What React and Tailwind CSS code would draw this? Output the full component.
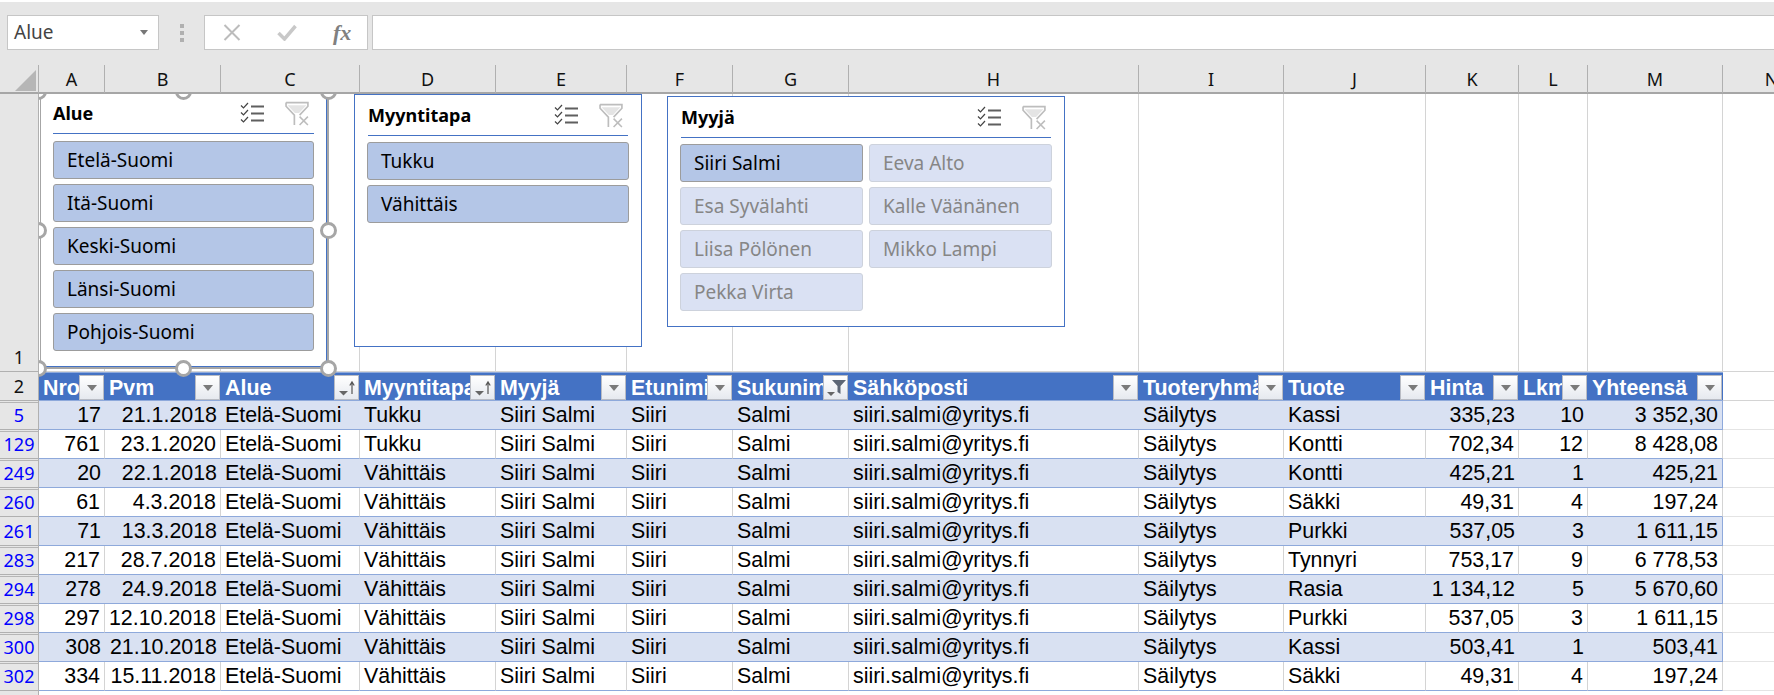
import React from 'react';

const gridCols = "grid grid-cols-[39px_66px_116px_139px_136px_131px_106px_116px_290px_145px_142px_93px_69px_135px_98px]";
const colLetters = ['A', 'B', 'C', 'D', 'E', 'F', 'G', 'H', 'I', 'J', 'K', 'L', 'M', 'N'];

const headers = [
    { label: 'Nro' },
    { label: 'Pvm' },
    { label: 'Alue', icon: 'sort' },
    { label: 'Myyntitapa', icon: 'sort' },
    { label: 'Myyjä' },
    { label: 'Etunimi' },
    { label: 'Sukunimi', icon: 'filter' },
    { label: 'Sähköposti' },
    { label: 'Tuoteryhmä' },
    { label: 'Tuote' },
    { label: 'Hinta' },
    { label: 'Lkm' },
    { label: 'Yhteensä' },
];

const rows = [
    { row: '5', nro: '17', pvm: '21.1.2018', tapa: 'Tukku', tuote: 'Kassi', hinta: '335,23', lkm: '10', yht: '3 352,30', gap: true },
    { row: '129', nro: '761', pvm: '23.1.2020', tapa: 'Tukku', tuote: 'Kontti', hinta: '702,34', lkm: '12', yht: '8 428,08', gap: true },
    { row: '249', nro: '20', pvm: '22.1.2018', tapa: 'Vähittäis', tuote: 'Kontti', hinta: '425,21', lkm: '1', yht: '425,21', gap: true },
    { row: '260', nro: '61', pvm: '4.3.2018', tapa: 'Vähittäis', tuote: 'Säkki', hinta: '49,31', lkm: '4', yht: '197,24', gap: true },
    { row: '261', nro: '71', pvm: '13.3.2018', tapa: 'Vähittäis', tuote: 'Purkki', hinta: '537,05', lkm: '3', yht: '1 611,15' },
    { row: '283', nro: '217', pvm: '28.7.2018', tapa: 'Vähittäis', tuote: 'Tynnyri', hinta: '753,17', lkm: '9', yht: '6 778,53', gap: true },
    { row: '294', nro: '278', pvm: '24.9.2018', tapa: 'Vähittäis', tuote: 'Rasia', hinta: '1 134,12', lkm: '5', yht: '5 670,60', gap: true },
    { row: '298', nro: '297', pvm: '12.10.2018', tapa: 'Vähittäis', tuote: 'Purkki', hinta: '537,05', lkm: '3', yht: '1 611,15', gap: true },
    { row: '300', nro: '308', pvm: '21.10.2018', tapa: 'Vähittäis', tuote: 'Kassi', hinta: '503,41', lkm: '1', yht: '503,41', gap: true },
    { row: '302', nro: '334', pvm: '15.11.2018', tapa: 'Vähittäis', tuote: 'Säkki', hinta: '49,31', lkm: '4', yht: '197,24', gap: true },
];

const MultiSelectIcon = () => (
    <svg width="25" height="22" viewBox="0 0 25 22" fill="none" className="shrink-0">
        <path d="M1 3.500l2.500 2.500L8 1M1 10.500l2.500 2.500L8 8M1 17.500l2.500 2.500L8 15" stroke="#444" strokeWidth="1.2" />
        <path d="M11 4.500h13M11 11.500h13M11 18.500h13" stroke="#5f5f5f" strokeWidth="2" />
    </svg>
);

const ClearFilterIcon = () => (
    <svg width="25" height="25" viewBox="0 0 24 24" fill="none" className="shrink-0">
        <path d="M1 1.500h21v3.500l-8 8.500M1 1.500V5l8 8.500V23" stroke="#bdbdbd" strokeWidth="1.6" />
        <path d="M2.500 4h18l-7 7.500h-4z" fill="#e4e4e4" />
        <path d="M14 15l8 8M22 15l-8 8" stroke="#bdbdbd" strokeWidth="1.5" />
    </svg>
);

const SlicerButton = ({ label, active = true }) => (
    <div className={`h-[38px] flex items-center pl-[13px] pt-px rounded-[3px] border whitespace-nowrap text-[19px] ${active ? 'bg-[#b4c6e7] border-[#9c9c9c] text-black' : 'bg-[#dae1f3] border-[#cdd2dc] text-[#868686]'}`}>
        {label}
    </div>
);

const Slicer = ({ title, className, children }) => (
    <div className={`absolute z-10 bg-white border border-[#4472c4] px-[13px] font-['Noto_Sans',sans-serif] ${className}`}>
        <div className="h-[41px] flex items-center justify-between pr-[4px] border-b border-[#4472c4]">
            <span className="font-bold text-[18px] text-black">{title}</span>
            <div className="flex items-center gap-[20px]">
                <MultiSelectIcon />
                <ClearFilterIcon />
            </div>
        </div>
        {children}
    </div>
);

const Handle = ({ className }) => (
    <div className={`absolute z-10 w-[17px] h-[17px] rounded-full bg-white border-[3px] border-[#a6a6a6] ${className}`} />
);

const HeaderCell = ({ label, icon }) => (
    <div className="flex min-w-0 pl-[4px] pr-px border-y border-[#8ea9db] last:border-r bg-[#4472c4]">
        <span className="flex-1 min-w-0 overflow-hidden whitespace-nowrap self-center pt-[4px] font-bold text-[21.4px] leading-[23px] text-white">{label}</span>
        <div className="shrink-0 self-end w-[25px] h-[25px] border border-[#b9bcc4] bg-gradient-to-b from-white to-[#e6e9ef] flex items-center justify-center">
            {icon === 'sort' && (
                <svg width="22" height="20" viewBox="0 0 22 20">
                    <path d="M3 13h9l-4.500 4.500z" fill="#666" />
                    <path d="M16 16V5M13.800 7.500L16 4l2.200 3.500" stroke="#555" strokeWidth="1.2" fill="none" />
                </svg>
            )}
            {icon === 'filter' && (
                <svg width="22" height="20" viewBox="0 0 22 20">
                    <path d="M2 14h8l-4 4z" fill="#666" />
                    <path d="M7 2h14l-5.500 6v8l-3-2V8z" fill="#5d6675" />
                </svg>
            )}
            {!icon && (
                <svg width="12" height="8" viewBox="0 0 12 8">
                    <path d="M1 1h10l-5 6z" fill="#7a7a7a" />
                </svg>
            )}
        </div>
    </div>
);

const App = () => {
    const rowCellBase = "flex items-center pt-[2px] overflow-hidden whitespace-nowrap text-[21.4px] leading-none text-black min-w-0";

    return (
        <div className="relative w-[1774px] h-[695px] overflow-hidden bg-white font-['Liberation_Sans',sans-serif]">
            {/* formula bar */}
            <div className="h-[65px] bg-[#e6e6e6] border-t-2 border-white flex pt-[13px] pl-[7px] font-['Noto_Sans',sans-serif]">
                <div className="w-[152px] h-[35px] bg-white border border-[#c6c6c6] flex items-center justify-between pl-[6px] pr-[10px] text-[19px] text-[#444]">
                    Alue
                    <svg width="8" height="5" viewBox="0 0 8 5"><path d="M0 0h8L4 5z" fill="#777" /></svg>
                </div>
                <div className="w-[45px] h-[35px] flex flex-col items-center justify-center gap-[3px]">
                    <div className="w-[4px] h-[4px] bg-[#b0b0b0]" />
                    <div className="w-[4px] h-[4px] bg-[#b0b0b0]" />
                    <div className="w-[4px] h-[4px] bg-[#b0b0b0]" />
                </div>
                <div className="w-[164px] h-[35px] bg-white border border-[#c6c6c6] flex items-center pl-[18px]">
                    <svg width="18" height="17" viewBox="0 0 18 17"><path d="M1.500 1l15 15M16.500 1l-15 15" stroke="#bcbcbc" strokeWidth="2" /></svg>
                    <svg width="20" height="17" viewBox="0 0 20 17" className="ml-[36px]"><path d="M1.500 9l6 6L18.500 2" stroke="#c8c8c8" strokeWidth="3.500" fill="none" /></svg>
                    <span className="ml-[36px] font-['Liberation_Serif',serif] italic font-bold text-[22px] leading-none text-[#808080]">fx</span>
                </div>
                <div className="ml-[4px] flex-1 h-[35px] bg-white border-y border-l border-[#c6c6c6]" />
            </div>

            {/* column letters */}
            <div className={`${gridCols} relative z-20 h-[29px] bg-[#e6e6e6] border-b-2 border-[#a6a6a6]`}>
                <div className="relative border-r border-[#b0b0b0]">
                    <svg width="22" height="21" viewBox="0 0 22 21" className="absolute left-[15px] top-[5px]"><path d="M21 0v21H0z" fill="#b6b6b6" /></svg>
                </div>
                {colLetters.map((letter) => (
                    <div key={letter} className="border-r border-[#b0b0b0] flex items-center justify-center pt-px text-[18px] text-[#111] font-['Noto_Sans',sans-serif]">
                        {letter}
                    </div>
                ))}
            </div>

            {/* row 1, the slicers lie over it */}
            <div className={`${gridCols} h-[278px]`}>
                <div className="relative z-20 bg-[#e6e6e6] border-r border-b border-[#b0b0b0] flex items-end justify-center text-[18px] text-[#111] font-['Noto_Sans',sans-serif]">
                    1
                </div>
                {colLetters.map((letter) => (
                    <div key={letter} className="border-r border-b border-[#d4d4d4]" />
                ))}
            </div>

            {/* table header */}
            <div className={`${gridCols} h-[29px]`}>
                <div className="relative z-20 bg-[#e6e6e6] border-r border-b border-[#b0b0b0] flex items-center justify-center text-[18px] text-[#111] font-['Noto_Sans',sans-serif]">
                    2
                </div>
                {headers.map((h) => (
                    <HeaderCell key={h.label} label={h.label} icon={h.icon} />
                ))}
                <div className="border-b border-[#d4d4d4]" />
            </div>

            {/* table rows */}
            {rows.map((r, i) => {
                const striped = i % 2 === 0;
                const cells = [
                    { text: r.nro, right: true },
                    { text: r.pvm, right: true },
                    { text: 'Etelä-Suomi' },
                    { text: r.tapa },
                    { text: 'Siiri Salmi' },
                    { text: 'Siiri' },
                    { text: 'Salmi' },
                    { text: 'siiri.salmi@yritys.fi' },
                    { text: 'Säilytys' },
                    { text: r.tuote },
                    { text: r.hinta, right: true },
                    { text: r.lkm, right: true },
                    { text: r.yht, right: true },
                ];
                return (
                    <div key={r.row} className={`${gridCols} h-[29px]`}>
                        <div className={`relative z-20 bg-[#e6e6e6] border-r border-b border-[#b0b0b0] flex items-center justify-center text-[18px] text-[#0000ff] font-['Noto_Sans',sans-serif] ${r.gap ? 'shadow-[inset_0_1px_0_#e6e6e6,inset_0_2px_0_#b5b5b5]' : ''}`}>
                            {r.row}
                        </div>
                        {cells.map((c, j) => (
                            <div
                                key={j}
                                className={`${rowCellBase} border-b border-[#8ea9db] ${c.right ? 'justify-end pr-[4px]' : 'pl-[4px]'} ${striped ? 'bg-[#d9e1f2]' : 'bg-white border-r border-r-[#d4d4d4]'} ${j === 12 ? 'border-r border-r-[#8ea9db]' : ''}`}
                            >
                                {c.text}
                            </div>
                        ))}
                        <div className="border-b border-[#e4e4e4]" />
                    </div>
                );
            })}

            {/* bottom edge of the row header */}
            <div className={`${gridCols} h-[4px]`}>
                <div className="relative z-20 bg-[#e6e6e6] border-r border-[#b0b0b0]" />
            </div>

            {/* Alue slicer, selected */}
            <div className="absolute z-10 left-[40px] top-[93px] w-[289px] h-[276px] border-2 border-[#a6a6a6]" />
            <Slicer title="Alue" className="left-[41px] top-[93px] w-[286px] h-[274px] border-t-0 border-l-0 pl-[12px] pr-[12px]">
                <div className="flex flex-col gap-[5px] mt-[7px]">
                    {['Etelä-Suomi', 'Itä-Suomi', 'Keski-Suomi', 'Länsi-Suomi', 'Pohjois-Suomi'].map((label) => (
                        <SlicerButton key={label} label={label} />
                    ))}
                </div>
            </Slicer>
            <Handle className="left-[30px] top-[83px]" />
            <Handle className="left-[175px] top-[83px]" />
            <Handle className="left-[320px] top-[83px]" />
            <Handle className="left-[30px] top-[222px]" />
            <Handle className="left-[320px] top-[222px]" />
            <Handle className="left-[30px] top-[360px]" />
            <Handle className="left-[175px] top-[360px]" />
            <Handle className="left-[320px] top-[360px]" />

            <Slicer title="Myyntitapa" className="left-[354px] top-[94px] w-[288px] h-[253px]">
                <div className="flex flex-col gap-[5px] mt-[6px] -mx-px">
                    <SlicerButton label="Tukku" />
                    <SlicerButton label="Vähittäis" />
                </div>
            </Slicer>

            <Slicer title="Myyjä" className="left-[667px] top-[96px] w-[398px] h-[231px]">
                <div className="grid grid-cols-2 gap-x-[6px] gap-y-[5px] mt-[6px] -mx-px">
                    <SlicerButton label="Siiri Salmi" />
                    <SlicerButton label="Eeva Alto" active={false} />
                    <SlicerButton label="Esa Syvälahti" active={false} />
                    <SlicerButton label="Kalle Väänänen" active={false} />
                    <SlicerButton label="Liisa Pölönen" active={false} />
                    <SlicerButton label="Mikko Lampi" active={false} />
                    <SlicerButton label="Pekka Virta" active={false} />
                </div>
            </Slicer>
        </div>
    );
};

export default App;
